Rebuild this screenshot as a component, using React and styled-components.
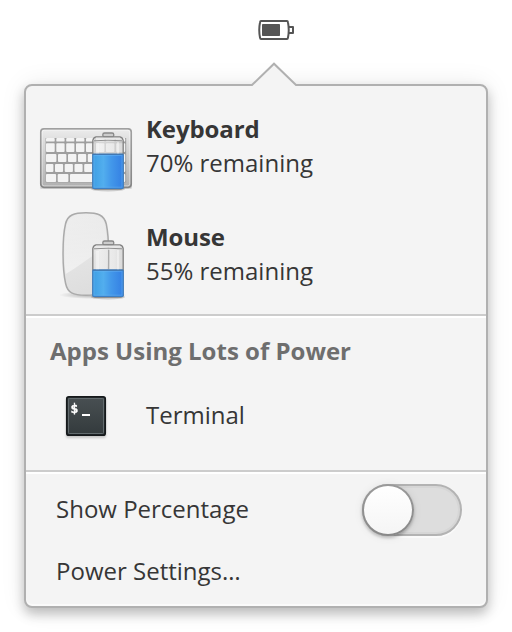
import React from 'react';
import styled, { createGlobalStyle } from 'styled-components';

const GlobalStyle = createGlobalStyle`
  *, *::before, *::after { box-sizing: border-box; }
  body {
    margin: 0;
    background: #fff;
    color: #363636;
    font: 24px/34px 'Open Sans', sans-serif;
  }
  svg { display: block; flex: none; }
`;

const Screen = styled.main`
  height: 632px;
  padding: 0 24px;
  overflow: hidden;
`;

const Panel = styled.header`
  display: flex;
  justify-content: center;
  height: 84px;
  padding: 18px 0 0 40px;
`;

const Popover = styled.section`
  position: relative;
  width: 464px;
  height: 524px;
  border: 2px solid #b0b0b0;
  border-radius: 8px;
  background: #f4f4f4;
  box-shadow: 0 6px 12px rgba(0, 0, 0, 0.24), 0 0 26px rgba(0, 0, 0, 0.08),
    inset 0 -2px 0 #fafafa;
`;

const Arrow = styled.svg`
  position: absolute;
  left: 224px;
  top: -24px;
`;

const Devices = styled.div`
  padding: 6px 0;
`;

const DeviceRow = styled.div`
  display: flex;
  align-items: center;
  gap: 12px;
  height: 108px;
  padding-left: 12px;
`;

const DeviceName = styled.div`
  font-weight: 700;
  letter-spacing: -0.1px;
`;

const Divider = styled.div`
  height: 4px;
  border-top: 2px solid #ccc;
  background: #fff;
`;

const Apps = styled.div`
  height: 152px;
  padding-top: 16px;
`;

const Heading = styled.h2`
  margin: 0 0 22px;
  padding-left: 24px;
  color: #6e6e6e;
  font: inherit;
  font-weight: 700;
`;

const AppRow = styled.div`
  display: flex;
  align-items: center;
  gap: 34px;
  height: 50px;
  padding-left: 34px;
`;

const AppIcon = styled.svg`
  filter: drop-shadow(0 2px 1px rgba(0, 0, 0, 0.18));
`;

const Settings = styled.div`
  padding-top: 4px;
`;

const SettingRow = styled.div`
  display: flex;
  align-items: center;
  justify-content: space-between;
  height: 62px;
  padding: 0 24px 0 30px;
`;

const Track = styled.div`
  width: 100px;
  height: 52px;
  margin-top: 2px;
  border: 2px solid #b3b3b3;
  border-radius: 26px;
  background: #ddd;
  box-shadow: inset 0 0 0 2px #d6d6d6, 0 2px 0 #fafafa;
`;

const Knob = styled.div`
  width: 52px;
  height: 52px;
  margin: -2px;
  border: 2px solid transparent;
  border-radius: 50%;
  background: linear-gradient(#fff, #f5f5f5) padding-box,
    linear-gradient(#9a9a9a, #888) border-box;
  box-shadow: 0 2px 3px rgba(0, 0, 0, 0.24), 0 1px 10px rgba(0, 0, 0, 0.08);
`;

const keyRows = [
  { y: 46, h: 3.6, edges: [8, 18.3, 28.2, 38, 48, 58, 68, 78, 88.8] },
  { y: 51.2, h: 8.8, edges: [8, 18.3, 28.2, 38, 48, 58, 68, 78, 88.8] },
  { y: 62, h: 8, edges: [8, 20, 30, 40, 49.8, 59.5, 69, 78, 88.8] },
  { y: 72, h: 8, edges: [8, 17, 26.7, 36.5, 46.2, 56, 66, 76, 88.8] },
  { y: 82, h: 8, edges: [8, 19.7, 32, 70, 80, 88.8] },
];

function Battery({ level }) {
  const top = 94.5 - level * 46;
  return (
    <g>
      <ellipse cx="70" cy="97" rx="17" ry="2.5" fill="#000" opacity=".16" />
      <rect x="64.8" y="41" width="11" height="4" rx="1.8" fill="#ccc" stroke="#888" strokeWidth="1.3" />
      <path d="M58 44.8H82Q84.6 45.2 85.2 48.5V95.5Q85 97 83 97H57Q55 97 54.8 95.5V48.5Q55.4 45.2 58 44.8Z" fill="url(#cell)" stroke="#808080" strokeWidth="1.3" />
      <path d="M56 48.8Q70 47.6 84 48.8" fill="none" stroke="#909090" strokeWidth="1" />
      <path d="M58 46.6H82" stroke="#e8e8e8" strokeWidth="1.6" />
      <rect x="54.8" y={top} width="30.4" height={96.4 - top} rx=".8" fill="url(#charge)" stroke="#3c7fc4" strokeWidth="1.2" />
      <rect x="56" y={top + 1.2} width="28" height={94 - top} fill="none" stroke="#69b5f5" strokeWidth="1" opacity=".5" />
      <rect x="58" y="51" width="3" height={top - 51} fill="#fff" opacity=".35" />
      <rect x="79" y="50" width="2" height={top - 50} fill="#fff" opacity=".4" />
      <path d={`M54.8 ${top}H85.2`} stroke="#4278b0" strokeWidth="1.3" />
    </g>
  );
}

function KeyboardIcon() {
  return (
    <svg width="96" height="108" viewBox="0 0 96 108">
      <defs>
        <linearGradient id="cell">
          <stop stopColor="#ddd" stopOpacity=".75" />
          <stop offset=".25" stopColor="#f0f0f0" stopOpacity=".7" />
          <stop offset=".7" stopColor="#e4e4e4" stopOpacity=".7" />
          <stop offset="1" stopColor="#d0d0d0" stopOpacity=".8" />
        </linearGradient>
        <linearGradient id="charge">
          <stop stopColor="#3f9fe4" />
          <stop offset=".35" stopColor="#52aeee" />
          <stop offset=".6" stopColor="#4398ea" />
          <stop offset="1" stopColor="#347fe3" />
        </linearGradient>
        <linearGradient id="case" x2="0" y2="1">
          <stop stopColor="#ececec" />
          <stop offset=".25" stopColor="#dadada" />
          <stop offset="1" stopColor="#b0b0b0" />
        </linearGradient>
        <linearGradient id="caseEdge" x2="0" y2="1">
          <stop stopColor="#a0a0a0" />
          <stop offset="1" stopColor="#858585" />
        </linearGradient>
      </defs>
      <rect x="2" y="94" width="92" height="3" rx="1.5" fill="#000" opacity=".12" />
      <rect x="2.8" y="36.8" width="90.4" height="58.5" rx="3" fill="url(#case)" stroke="url(#caseEdge)" strokeWidth="1.7" />
      <rect x="4.2" y="38.2" width="87.6" height="55.7" rx="2" fill="none" stroke="#fff" opacity=".45" />
      <rect x="7.6" y="46" width="80.6" height="44.4" fill="#9e9e9e" />
      {keyRows.map(({ y, h, edges }) =>
        edges.slice(0, -1).map((x, i) => (
          <rect key={`${y}-${x}`} x={x} y={y} width={edges[i + 1] - x - 1.6} height={h} rx=".9" fill="#f3f3f3" />
        ))
      )}
      <Battery level={0.7} />
    </svg>
  );
}

function MouseIcon() {
  return (
    <svg width="96" height="108" viewBox="0 0 96 108">
      <defs>
        <linearGradient id="mouse" x2=".2" y2="1">
          <stop stopColor="#ececec" />
          <stop offset="1" stopColor="#dedede" />
        </linearGradient>
        <linearGradient id="shine" x2="0" y2="1">
          <stop stopColor="#fff" stopOpacity=".1" />
          <stop offset="1" stopColor="#fff" stopOpacity=".5" />
        </linearGradient>
        <radialGradient id="ground">
          <stop stopOpacity=".3" />
          <stop offset="1" stopOpacity="0" />
        </radialGradient>
      </defs>
      <ellipse cx="55" cy="95" rx="34" ry="4" fill="url(#ground)" />
      <path d="M48 12.7C60 12.7 66 15 68.3 24C71.2 38 71.6 68 68.3 83C66 93 60 95.3 48 95.3C35 95.3 29.5 93 27.5 83C24.2 68 24.2 38 27.5 24C29.5 15 36 12.7 48 12.7Z" fill="url(#mouse)" stroke="#aaa" strokeWidth="1.5" />
      <path d="M48 14.2C59 14.2 64.8 16.5 66.9 25C68 32 69.2 40 69 46C58 53 44 64 27.7 74C25.5 58 26 38 29 25C31 17 37 14.2 48 14.2Z" fill="url(#shine)" />
      <Battery level={0.53} />
      <path d="M70.7 50V69" stroke="#a8a8a8" strokeWidth="1.2" />
    </svg>
  );
}

function TerminalIcon() {
  return (
    <AppIcon width="52" height="50" viewBox="0 0 52 50">
      <defs>
        <linearGradient id="terminalFace" x2="0" y2="1">
          <stop stopColor="#495053" />
          <stop offset="1" stopColor="#333a3c" />
        </linearGradient>
      </defs>
      <rect x="6.8" y="6.8" width="38.4" height="38.4" rx="2" fill="url(#terminalFace)" stroke="#15191b" strokeWidth="1.7" />
      <rect x="8.5" y="8.5" width="35" height="35" rx=".8" fill="none" stroke="#626b6e" />
      <text x="10.6" y="22.6" fill="#fff" stroke="#fff" strokeWidth=".35" fontFamily="'DejaVu Sans Mono', monospace" fontSize="13" fontWeight="700">$</text>
      <rect x="22" y="24" width="8" height="2" fill="#fff" />
    </AppIcon>
  );
}

function BatteryIndicator() {
  return (
    <svg width="36" height="24" viewBox="0 0 36 24" fill="none" stroke="#555" strokeWidth="2">
      <path d="M3 3H29Q29.8 3 30 4.5Q31.5 12 30 19.5Q29.8 21 29 21H3Q2.2 21 2 19.5Q.5 12 2 4.5Q2.2 3 3 3Z" />
      <path d="M31 9H35V15H31" strokeLinejoin="round" />
      <rect x="4" y="6" width="18" height="12" rx=".7" fill="#555" stroke="none" />
    </svg>
  );
}

export default function App() {
  return (
    <>
      <GlobalStyle />
      <Screen>
        <Panel><BatteryIndicator /></Panel>
        <Popover>
          <Arrow width="48" height="26" viewBox="0 0 48 26">
            <path d="M1 26V24L24 2L47 24V26Z" fill="#f4f4f4" />
            <path d="M0 23H2L24 1.7L46 23H48" fill="none" stroke="#b0b0b0" strokeWidth="2" />
          </Arrow>
          <Devices>
            <DeviceRow>
              <KeyboardIcon />
              <div><DeviceName>Keyboard</DeviceName><div>70% remaining</div></div>
            </DeviceRow>
            <DeviceRow>
              <MouseIcon />
              <div><DeviceName>Mouse</DeviceName><div>55% remaining</div></div>
            </DeviceRow>
          </Devices>
          <Divider />
          <Apps>
            <Heading>Apps Using Lots of Power</Heading>
            <AppRow><TerminalIcon />Terminal</AppRow>
          </Apps>
          <Divider />
          <Settings>
            <SettingRow>Show Percentage<Track><Knob /></Track></SettingRow>
            <SettingRow>Power Settings…</SettingRow>
          </Settings>
        </Popover>
      </Screen>
    </>
  );
}
